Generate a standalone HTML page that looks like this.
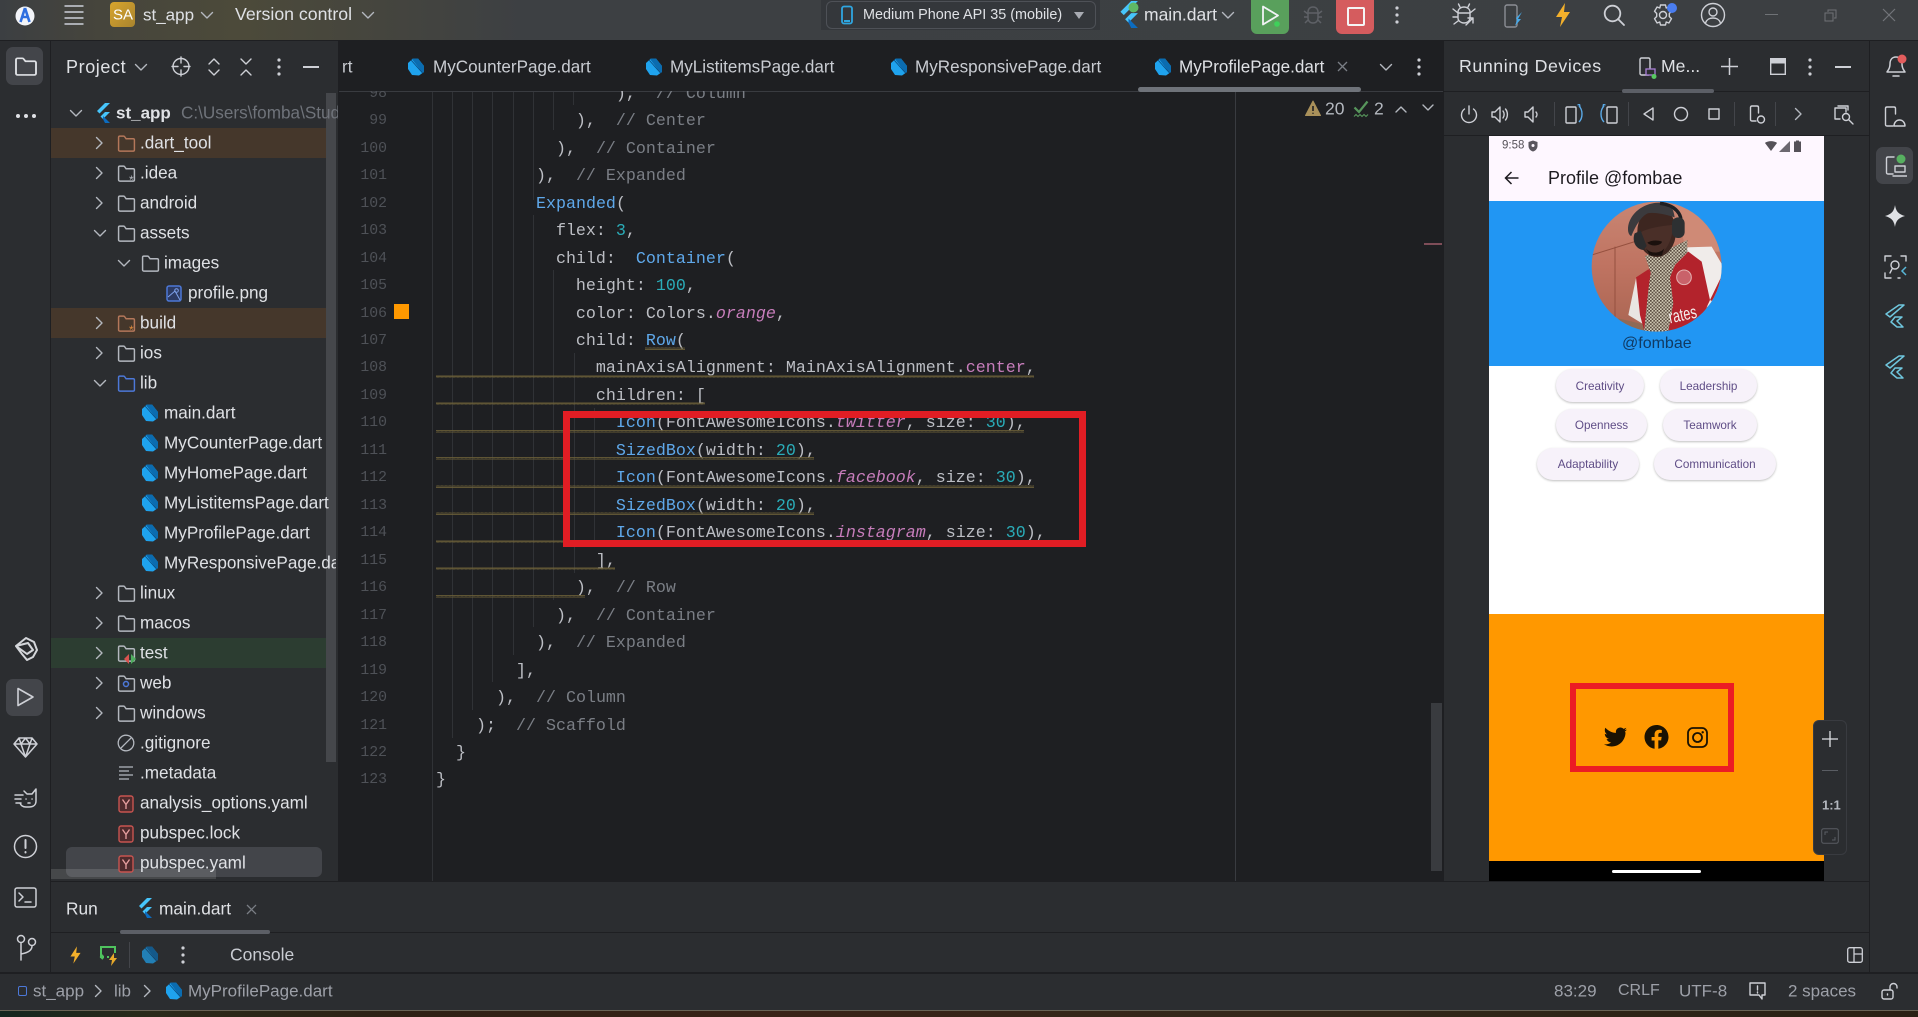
<!DOCTYPE html>
<html><head><meta charset="utf-8"><title>st_app</title>
<style>
html,body{margin:0;padding:0;background:#1e1f22}
#r{position:relative;width:1918px;height:1017px;overflow:hidden;background:#2b2d30;font-family:"Liberation Sans",sans-serif;color:#dfe1e5}
#r div,#r svg{position:absolute}
.t{position:absolute;white-space:pre;line-height:1;transform:translateY(-50%);font-size:17.15px;color:#dfe1e5}
.s{font-size:17.1px;color:#c9ccd2}
.u{font-size:17px;color:#9da0a8}
.k{stroke:#ced0d6;fill:none;stroke-width:1.4;stroke-linecap:round;stroke-linejoin:round}
.hl{left:51px;width:275px;height:30px}
#code{position:absolute;left:0;top:91px;width:1236px;height:790px;overflow:hidden;font-family:"Liberation Mono",monospace;font-size:16.67px;color:#bcbec4}
#code .l{position:relative;height:27.48px;line-height:27.48px;padding-left:436px;white-space:pre}
#code b{position:absolute;left:358px;width:29px;text-align:right;font-weight:400;font-size:14.8px;color:#4e5157}
i{font-style:italic;color:#c77dbb}
.b{color:#5fa8ea}.n{color:#2aacb8}.c{color:#7a7e85}
.chip{background:#f7f2fa;border-radius:17px;box-shadow:0 1px 2px rgba(0,0,0,.25);color:#5f4d86;font-size:11.7px;text-align:center;white-space:pre}
</style></head><body>
<div id="r">
<svg width="0" height="0" style="left:0;top:0">
<defs>
<symbol id="folder" viewBox="0 0 18 18"><path d="M1.5 15V3.2c0-.7.5-1.2 1.2-1.2h3.6c.4 0 .7.2.9.5L8.6 4.5h6.7c.7 0 1.2.5 1.2 1.2V15c0 .7-.5 1.2-1.2 1.2H2.7c-.7 0-1.200-.5-1.200-1.200z" fill="none" stroke="currentColor" stroke-width="1.4"/></symbol>
<symbol id="dart" viewBox="0 0 18 18"><path d="M6 .5 11 .5 17 8 17 14 12 17.500 5 17 1 11 1 5z" fill="#1fa3ee"/><path d="M5 1 6 .5 11 .5 17 8 17 14 15.500 15z" fill="#0b6cb0"/><path d="M4 2 15.500 15" stroke="#0a4a7e" stroke-width=".8"/></symbol>
<symbol id="flutter" viewBox="0 0 16 20"><path d="M10 0h5L4.500 10.500 2 8z" fill="#47c5fb"/><path d="M15 9h-5l-4.500 4.500L8 16z" fill="#47c5fb"/><path d="M8 16l2 4h5l-7-7z" fill="#0c6cc0"/></symbol>
<symbol id="cr" viewBox="0 0 18 18"><path d="M6.500 3.500 12 9l-5.500 5.500" fill="none" stroke="#b4b8bf" stroke-width="1.400" stroke-linecap="round" stroke-linejoin="round"/></symbol>
<symbol id="cd" viewBox="0 0 18 18"><path d="M3.500 6.500 9 12l5.500-5.500" fill="none" stroke="#b4b8bf" stroke-width="1.400" stroke-linecap="round" stroke-linejoin="round"/></symbol>
<symbol id="yaml" viewBox="0 0 16 18"><rect x="1" y="1" width="14" height="16" rx="2" fill="#4f2b2d" stroke="#c75450" stroke-width="1.400"/><path d="M4.500 4.500 8 9.500l3.500-5M8 9.500V14" fill="none" stroke="#e8a0a0" stroke-width="1.300"/></symbol>
<symbol id="dots" viewBox="0 0 6 20"><circle cx="3" cy="3" r="1.600" fill="#ced0d6"/><circle cx="3" cy="10" r="1.600" fill="#ced0d6"/><circle cx="3" cy="17" r="1.600" fill="#ced0d6"/></symbol>
<pattern id="w" width="4" height="3" patternUnits="userSpaceOnUse"><path d="M0 2.500 1 .5 2 2.500 3 .5 4 2.500" fill="none" stroke="#6f6239" stroke-width=".8"/></pattern>
</defs></svg>

<!-- title bar -->
<div style="left:0;top:0;width:1918px;height:40px;background:linear-gradient(90deg,#3c3f42 0,#46453c 100px,#4c4a3a 240px,#45453e 380px,#3d4043 520px,#3c3f42 100%)"></div>
<div style="left:0;top:40px;width:1918px;height:1px;background:#1e1f22"></div>
<svg style="left:14px;top:5px" width="22" height="22" viewBox="0 0 22 22"><circle cx="11" cy="11" r="9.500" fill="#f2f4f8"/><path d="M11 3 6.500 17M11 3l4.500 14M8 12h6" stroke="#2f6fe0" stroke-width="2.600" fill="none"/></svg>
<svg style="left:63px;top:4px" width="22" height="22" viewBox="0 0 22 22"><path d="M1.500 2h19M1.500 8h19M1.500 14h19M1.500 20h19" stroke="#b9bcc2" stroke-width="1.800" fill="none"/></svg>
<div style="left:110px;top:2px;width:25px;height:25px;border-radius:4px;background:linear-gradient(135deg,#d8a52d,#a9842e)"></div>
<span class="t" style="left:113px;top:15px;font-size:15px;color:#fff">SA</span>
<span class="t" style="left:143px;top:15px;font-size:17px">st_app</span>
<svg style="left:198px;top:6px" width="18" height="18"><use href="#cd"/></svg>
<span class="t" style="left:235px;top:15px;font-size:17.700px">Version control</span>
<svg style="left:359px;top:6px" width="18" height="18"><use href="#cd"/></svg>

<div style="left:821px;top:0;width:279px;height:30px;background:#34373b"></div>
<div style="left:826px;top:1px;width:268px;height:26px;border:1px solid #4e5157;border-radius:6px"></div>
<svg style="left:840px;top:5px" width="14" height="20" viewBox="0 0 14 20"><rect x="2" y="1.500" width="10" height="17" rx="2" fill="none" stroke="#2fa6e0" stroke-width="1.800"/><rect x="4" y="15" width="6" height="2" fill="#2fa6e0"/></svg>
<span class="t" style="left:863px;top:15px;font-size:14.400px;color:#dfe1e5">Medium Phone API 35 (mobile)</span>
<svg style="left:1073px;top:11px" width="12" height="9"><path d="M1 1h10L6 8z" fill="#a8abb2"/></svg>
<svg style="left:1117px;top:1px" width="23" height="27" viewBox="0 0 16 20"><use href="#flutter"/></svg>
<svg style="left:1128px;top:2px" width="11" height="11"><circle cx="5.500" cy="5.500" r="5" fill="#5fb865"/></svg>
<span class="t" style="left:1144px;top:15px;font-size:17.500px">main.dart</span>
<svg style="left:1219px;top:6px" width="18" height="18"><use href="#cd"/></svg>
<div style="left:1251px;top:-6px;width:38px;height:40px;background:#59a05c;border-radius:6px"></div>
<svg style="left:1259px;top:3px" width="24" height="26" viewBox="0 0 24 26"><path d="M4 3.500 19 12.500 4 21.500z" fill="none" stroke="#f1f3f5" stroke-width="1.800" stroke-linejoin="round"/><circle cx="18" cy="21" r="2.800" fill="#3fd05a"/></svg>
<svg style="left:1302px;top:4px" width="22" height="22" viewBox="0 0 22 22"><path d="M6 8c0-3 2-5 5-5s5 2 5 5v6c0 3-2 5-5 5s-5-2-5-5zM2 7l4 3M20 7l-4 3M2 13h4M20 13h-4M3 19l3-3M19 19l-3-3M6 9h10" fill="none" stroke="#5e6166" stroke-width="1.500"/></svg>
<div style="left:1336px;top:-6px;width:38px;height:40px;background:#d55c5e;border-radius:6px"></div>
<div style="left:1347px;top:7px;width:14px;height:15px;border:2px solid #f5f5f5;border-radius:2px"></div>
<svg style="left:1394px;top:5px" width="6" height="20"><use href="#dots"/></svg>
<svg style="left:1451px;top:3px" width="26" height="24" viewBox="0 0 26 24"><path d="M7 9c0-3 3-5 6-5s6 2 6 5v6c0 3-3 5-6 5s-6-2-6-5zM2 6l5 4M2 14h5M3 21l4-3M24 6l-5 4M7 10h12M9 4 7.500 1M17 4l1.500-3" class="k"/><path d="M15 22l7-7m0 0h-5m5 0v5" class="k"/></svg>
<svg style="left:1503px;top:3px" width="20" height="26" viewBox="0 0 20 26"><rect x="2" y="2" width="12" height="22" rx="2" class="k" style="stroke:#8b8e94"/><path d="M13 15 19 9l-4 7 3 0-6 7 2-6z" fill="#47a9e8"/></svg>
<svg style="left:1554px;top:2px" width="18" height="26" viewBox="0 0 18 26"><path d="M11 1 2 15h6l-2 10 10-15h-6z" fill="#f3b02b"/></svg>
<svg style="left:1602px;top:3px" width="24" height="24" viewBox="0 0 24 24"><circle cx="10.500" cy="10.500" r="7.800" class="k" style="stroke-width:1.800"/><path d="M16 16l6 6" class="k" style="stroke-width:1.800"/></svg>
<svg style="left:1651px;top:3px" width="24" height="24" viewBox="0 0 24 24"><path d="M9.500 2h5l.7 3 2.700-1 2.600 4.300-2.200 2.200v3l2.200 2.200-2.600 4.300-2.700-1-.7 3h-5l-.7-3-2.700 1-2.600-4.300 2.200-2.200v-3L3.500 8.300 6.100 4l2.700 1z" class="k"/><circle cx="12" cy="12" r="3.500" class="k"/></svg>
<svg style="left:1666px;top:2px" width="12" height="12"><circle cx="6" cy="6" r="5" fill="#4a7df0"/></svg>
<svg style="left:1700px;top:2px" width="26" height="26" viewBox="0 0 26 26"><circle cx="13" cy="13" r="11.500" class="k"/><circle cx="13" cy="10" r="4" class="k"/><path d="M5.500 21c1.500-4 4-5 7.500-5s6 1 7.500 5" class="k"/></svg>
<div style="left:1765px;top:14px;width:13px;height:1px;background:#6f7276"></div>
<svg style="left:1824px;top:9px" width="13" height="13"><path d="M1 4h8v8H1zM4 3V1h8v8h-2" fill="none" stroke="#6f7276"/></svg>
<svg style="left:1882px;top:8px" width="14" height="14"><path d="M1 1l12 12M13 1 1 13" stroke="#72757a" stroke-width="1.200"/></svg>

<!-- left stripe -->
<div style="left:50px;top:41px;width:1px;height:931px;background:#1e1f22"></div>
<div style="left:6px;top:47px;width:37px;height:38px;border-radius:7px;background:#43454a"></div>
<svg style="left:14px;top:56px;color:#dfe1e5" width="24" height="21" viewBox="0 0 18 18" preserveAspectRatio="none"><use href="#folder"/></svg>
<svg style="left:15px;top:113px" width="22" height="6"><circle cx="3" cy="3" r="2" fill="#dfe1e5"/><circle cx="11" cy="3" r="2" fill="#dfe1e5"/><circle cx="19" cy="3" r="2" fill="#dfe1e5"/></svg>
<svg style="left:14px;top:636px" width="24" height="25" viewBox="0 0 24 25"><path d="M2 10 12 2 20 6 23 14 19 21 13 24 8 18zM2 10 14 7 19 14 13 18 2 10z" fill="none" stroke="#d4d6da" stroke-width="2" stroke-linejoin="round"/></svg>
<div style="left:6px;top:679px;width:37px;height:37px;border-radius:7px;background:#43454a"></div>
<svg style="left:15px;top:686px" width="20" height="22" viewBox="0 0 20 22"><path d="M3 2.500 18 11 3 19.500z" class="k" style="stroke-width:1.600"/></svg>
<svg style="left:13px;top:736px" width="25" height="22" viewBox="0 0 25 22"><path d="M6 2h13l5 6-11.500 13L1 8zM1 8h23M8 8l4.500 13L17 8M6 2l2 6 4.500-6 4.500 6 2-6" class="k" style="stroke-width:1.500"/></svg>
<svg style="left:14px;top:787px" width="24" height="22" viewBox="0 0 24 22"><path d="M10 4 13 7h5l4-5v12c0 4-3 6-7 6h-3c-3 0-5-1-6-4M1 8h8M1 12h6M2 16h5M12 12h.1M18 12h.1M14 16h2" class="k" style="stroke-width:1.500"/></svg>
<svg style="left:13px;top:834px" width="25" height="25" viewBox="0 0 25 25"><circle cx="12.500" cy="12.500" r="11" class="k" style="stroke-width:1.500"/><path d="M12.500 6v8M12.500 18v.5" class="k" style="stroke-width:2"/></svg>
<svg style="left:14px;top:887px" width="23" height="21" viewBox="0 0 23 21"><rect x="1" y="1" width="21" height="19" rx="2" class="k" style="stroke-width:1.500"/><path d="M5 6l4 4-4 4M11 15h6" class="k" style="stroke-width:1.500"/></svg>
<svg style="left:15px;top:934px" width="22" height="28" viewBox="0 0 22 28"><circle cx="6" cy="5" r="3.500" class="k" style="stroke-width:1.500"/><circle cx="17" cy="8" r="3.500" class="k" style="stroke-width:1.500"/><path d="M6 9v17M17 12c0 5-5 7-11 8" class="k" style="stroke-width:1.500"/></svg>

<!-- project panel -->
<div style="left:338px;top:41px;width:1px;height:840px;background:#1e1f22"></div>
<span class="t" style="left:66px;top:67px;font-size:18px;letter-spacing:.6px">Project</span>
<svg style="left:132px;top:58px" width="18" height="18"><use href="#cd"/></svg>
<svg style="left:171px;top:56px" width="20" height="21" viewBox="0 0 20 21"><circle cx="10" cy="10.500" r="8" class="k"/><path d="M10 1v6M10 14v6M1 10.500h6M13 10.500h6" class="k"/></svg>
<svg style="left:207px;top:58px" width="14" height="18" viewBox="0 0 14 18"><path d="M2 6l5-5 5 5M2 12l5 5 5-5" class="k"/></svg>
<svg style="left:239px;top:58px" width="14" height="18" viewBox="0 0 14 18"><path d="M2 1l5 5 5-5M2 17l5-5 5 5" class="k"/></svg>
<svg style="left:276px;top:57px" width="6" height="20"><use href="#dots"/></svg>
<div style="left:303px;top:66px;width:16px;height:1.500px;background:#ced0d6"></div>

<div class="hl" style="top:128px;background:#45372b"></div>
<div class="hl" style="top:308px;background:#45372b"></div>
<div class="hl" style="top:638px;background:#2c3d31"></div>
<div style="left:66px;top:847px;width:256px;height:30px;border-radius:6px;background:#43454a"></div>
<div style="left:326px;top:93px;width:10px;height:669px;background:#45474b"></div>
<div style="left:51px;top:869px;width:165px;height:10px;background:rgba(255,255,255,.13)"></div>

<svg style="left:67px;top:104px" width="18" height="18"><use href="#cd"/></svg>
<svg style="left:95px;top:103px" width="16" height="20" viewBox="0 0 16 20"><use href="#flutter"/></svg>
<span class="t" style="left:116px;top:113px;font-weight:700;font-size:17px">st_app</span>
<div style="left:181px;top:100px;width:157px;height:26px;overflow:hidden"><span class="t" style="left:0;top:13px;color:#6f737a">C:\Users\fomba\Studio</span></div>

<svg style="left:90px;top:134px" width="18" height="18"><use href="#cr"/></svg>
<svg style="left:117px;top:134px;color:#b4775a" width="19" height="19"><use href="#folder"/></svg>
<span class="t" style="left:140px;top:143px">.dart_tool</span>
<svg style="left:90px;top:164px" width="18" height="18"><use href="#cr"/></svg>
<svg style="left:117px;top:164px;color:#b4b8bf" width="19" height="19"><use href="#folder"/></svg>
<span class="t" style="left:129px;top:180px;font-size:12px;color:#b4b8bf">*</span>
<span class="t" style="left:140px;top:173px">.idea</span>
<svg style="left:90px;top:194px" width="18" height="18"><use href="#cr"/></svg>
<svg style="left:117px;top:194px;color:#b4b8bf" width="19" height="19"><use href="#folder"/></svg>
<span class="t" style="left:140px;top:203px">android</span>
<svg style="left:91px;top:224px" width="18" height="18"><use href="#cd"/></svg>
<svg style="left:117px;top:224px;color:#b4b8bf" width="19" height="19"><use href="#folder"/></svg>
<span class="t" style="left:140px;top:233px">assets</span>
<svg style="left:115px;top:254px" width="18" height="18"><use href="#cd"/></svg>
<svg style="left:141px;top:254px;color:#b4b8bf" width="19" height="19"><use href="#folder"/></svg>
<span class="t" style="left:164px;top:263px">images</span>
<svg style="left:166px;top:285px" width="16" height="17" viewBox="0 0 16 17"><rect x="1" y="1" width="14" height="15" rx="2" fill="#2c3a63" stroke="#4c78d8" stroke-width="1.500"/><circle cx="10.500" cy="5.500" r="1.800" fill="none" stroke="#7da0ea"/><path d="M2 12 9 6l5 9" fill="none" stroke="#7da0ea"/></svg>
<span class="t" style="left:188px;top:293px">profile.png</span>
<svg style="left:90px;top:314px" width="18" height="18"><use href="#cr"/></svg>
<svg style="left:117px;top:314px;color:#b4775a" width="19" height="19"><use href="#folder"/></svg>
<span class="t" style="left:129px;top:330px;font-size:12px;color:#e08a3c">*</span>
<span class="t" style="left:140px;top:323px">build</span>
<svg style="left:90px;top:344px" width="18" height="18"><use href="#cr"/></svg>
<svg style="left:117px;top:344px;color:#b4b8bf" width="19" height="19"><use href="#folder"/></svg>
<span class="t" style="left:140px;top:353px">ios</span>
<svg style="left:91px;top:374px" width="18" height="18"><use href="#cd"/></svg>
<svg style="left:117px;top:374px;color:#4c78d8" width="19" height="19"><use href="#folder"/></svg>
<span class="t" style="left:140px;top:383px">lib</span>
<svg style="left:141px;top:404px" width="18" height="18"><use href="#dart"/></svg>
<span class="t" style="left:164px;top:413px">main.dart</span>
<svg style="left:141px;top:434px" width="18" height="18"><use href="#dart"/></svg>
<span class="t" style="left:164px;top:443px">MyCounterPage.dart</span>
<svg style="left:141px;top:464px" width="18" height="18"><use href="#dart"/></svg>
<span class="t" style="left:164px;top:473px">MyHomePage.dart</span>
<svg style="left:141px;top:494px" width="18" height="18"><use href="#dart"/></svg>
<span class="t" style="left:164px;top:503px">MyListitemsPage.dart</span>
<svg style="left:141px;top:524px" width="18" height="18"><use href="#dart"/></svg>
<span class="t" style="left:164px;top:533px">MyProfilePage.dart</span>
<svg style="left:141px;top:554px" width="18" height="18"><use href="#dart"/></svg>
<div style="left:164px;top:550px;width:172px;height:26px;overflow:hidden"><span class="t" style="left:0;top:13px">MyResponsivePage.dart</span></div>
<svg style="left:90px;top:584px" width="18" height="18"><use href="#cr"/></svg>
<svg style="left:117px;top:584px;color:#b4b8bf" width="19" height="19"><use href="#folder"/></svg>
<span class="t" style="left:140px;top:593px">linux</span>
<svg style="left:90px;top:614px" width="18" height="18"><use href="#cr"/></svg>
<svg style="left:117px;top:614px;color:#b4b8bf" width="19" height="19"><use href="#folder"/></svg>
<span class="t" style="left:140px;top:623px">macos</span>
<svg style="left:90px;top:644px" width="18" height="18"><use href="#cr"/></svg>
<svg style="left:117px;top:644px;color:#b4b8bf" width="19" height="19"><use href="#folder"/></svg>
<svg style="left:124px;top:654px" width="12" height="10"><path d="M5 0 0 5l5 5z" fill="#d9534f"/><path d="M7 0l5 5-5 5z" fill="#4fae5f"/></svg>
<span class="t" style="left:140px;top:653px">test</span>
<svg style="left:90px;top:674px" width="18" height="18"><use href="#cr"/></svg>
<svg style="left:117px;top:674px;color:#b4b8bf" width="19" height="19"><use href="#folder"/></svg>
<svg style="left:122px;top:680px" width="8" height="8"><circle cx="4" cy="4" r="2.500" fill="none" stroke="#4c78d8" stroke-width="1.500"/></svg>
<span class="t" style="left:140px;top:683px">web</span>
<svg style="left:90px;top:704px" width="18" height="18"><use href="#cr"/></svg>
<svg style="left:117px;top:704px;color:#b4b8bf" width="19" height="19"><use href="#folder"/></svg>
<span class="t" style="left:140px;top:713px">windows</span>
<svg style="left:117px;top:734px" width="18" height="18" viewBox="0 0 18 18"><circle cx="9" cy="9" r="7.800" fill="none" stroke="#b4b8bf" stroke-width="1.300"/><path d="M4 14 14 4" stroke="#b4b8bf" stroke-width="1.300"/></svg>
<span class="t" style="left:140px;top:743px">.gitignore</span>
<svg style="left:118px;top:766px" width="16" height="14" viewBox="0 0 16 14"><path d="M1 1h14M1 5h10M1 9h14M1 13h10" stroke="#b4b8bf" stroke-width="1.300"/></svg>
<span class="t" style="left:140px;top:773px">.metadata</span>
<svg style="left:118px;top:795px" width="16" height="18" viewBox="0 0 16 18"><use href="#yaml"/></svg>
<span class="t" style="left:140px;top:803px">analysis_options.yaml</span>
<svg style="left:118px;top:825px" width="16" height="18" viewBox="0 0 16 18"><use href="#yaml"/></svg>
<span class="t" style="left:140px;top:833px">pubspec.lock</span>
<svg style="left:118px;top:855px" width="16" height="18" viewBox="0 0 16 18"><use href="#yaml"/></svg>
<span class="t" style="left:140px;top:863px">pubspec.yaml</span>

<!-- editor -->
<div style="left:339px;top:41px;width:1104px;height:840px;background:#1e1f22"></div>
<div style="left:339px;top:91px;width:1104px;height:1px;background:#393b40"></div>
<span class="t s" style="left:342px;top:67px">rt</span>
<svg style="left:407px;top:58px" width="18" height="18"><use href="#dart"/></svg>
<span class="t s" style="left:433px;top:67px">MyCounterPage.dart</span>
<svg style="left:645px;top:58px" width="18" height="18"><use href="#dart"/></svg>
<span class="t s" style="left:670px;top:67px">MyListitemsPage.dart</span>
<svg style="left:890px;top:58px" width="18" height="18"><use href="#dart"/></svg>
<span class="t s" style="left:915px;top:67px">MyResponsivePage.dart</span>
<svg style="left:1154px;top:58px" width="18" height="18"><use href="#dart"/></svg>
<span class="t s" style="left:1179px;top:67px;color:#dfe1e5">MyProfilePage.dart</span>
<svg style="left:1336px;top:60px" width="14" height="14"><path d="M2 2l9 9M11 2l-9 9" stroke="#7a7e85" stroke-width="1.300"/></svg>
<svg style="left:1377px;top:58px" width="18" height="18"><use href="#cd"/></svg>
<svg style="left:1416px;top:57px" width="6" height="20"><use href="#dots"/></svg>
<div style="left:1138px;top:87px;width:223px;height:5px;border-radius:3px;background:#6f737a"></div>

<svg width="1236" height="881" style="left:0;top:0">
<g stroke="#303236" stroke-width="1">
<path d="M432.500 92V881M452.500 92V738M472.500 92V710M492.500 92V682M513.500 92V655M533.500 92V200M533.500 215V627M553.500 92V130M553.500 270V600M573.500 92V105M574.500 353V573M594.500 408V545"/>
</g>
<path d="M1235.500 92V881" stroke="#393b40"/>
<rect x="394" y="304" width="15" height="15" fill="#ff9800"/>
</svg>

<div id="code">
<div style="position:relative;margin-top:-10.250px">
<div class="l"><b>98</b>                  ),  <span class="c">// Column</span></div>
<div class="l"><b>99</b>              ),  <span class="c">// Center</span></div>
<div class="l"><b>100</b>            ),  <span class="c">// Container</span></div>
<div class="l"><b>101</b>          ),  <span class="c">// Expanded</span></div>
<div class="l"><b>102</b>          <span class="b">Expanded</span>(</div>
<div class="l"><b>103</b>            flex: <span class="n">3</span>,</div>
<div class="l"><b>104</b>            child:  <span class="b">Container</span>(</div>
<div class="l"><b>105</b>              height: <span class="n">100</span>,</div>
<div class="l"><b>106</b>              color: Colors.<i>orange</i>,</div>
<div class="l"><b>107</b>              child: <span class="b">Row</span>(</div>
<div class="l"><b>108</b>                mainAxisAlignment: MainAxisAlignment.<span style="color:#c77dbb">center</span>,</div>
<div class="l"><b>109</b>                children: [</div>
<div class="l"><b>110</b>                  <span class="b">Icon</span>(FontAwesomeIcons.<i>twitter</i>, size: <span class="n">30</span>),</div>
<div class="l"><b>111</b>                  <span class="b">SizedBox</span>(width: <span class="n">20</span>),</div>
<div class="l"><b>112</b>                  <span class="b">Icon</span>(FontAwesomeIcons.<i>facebook</i>, size: <span class="n">30</span>),</div>
<div class="l"><b>113</b>                  <span class="b">SizedBox</span>(width: <span class="n">20</span>),</div>
<div class="l"><b>114</b>                  <span class="b">Icon</span>(FontAwesomeIcons.<i>instagram</i>, size: <span class="n">30</span>),</div>
<div class="l"><b>115</b>                ],</div>
<div class="l"><b>116</b>              ),  <span class="c">// Row</span></div>
<div class="l"><b>117</b>            ),  <span class="c">// Container</span></div>
<div class="l"><b>118</b>          ),  <span class="c">// Expanded</span></div>
<div class="l"><b>119</b>        ],</div>
<div class="l"><b>120</b>      ),  <span class="c">// Column</span></div>
<div class="l"><b>121</b>    );  <span class="c">// Scaffold</span></div>
<div class="l"><b>122</b>  }</div>
<div class="l"><b>123</b>}</div>
</div></div>

<svg width="1236" height="881" style="left:0;top:0">
<rect x="645" y="347" width="40" height="3" fill="url(#w)"/>
<rect x="436" y="375" width="598" height="3" fill="url(#w)"/>
<rect x="436" y="402" width="269" height="3" fill="url(#w)"/>
<rect x="436" y="430" width="588" height="3" fill="url(#w)"/>
<rect x="436" y="457" width="378" height="3" fill="url(#w)"/>
<rect x="436" y="485" width="598" height="3" fill="url(#w)"/>
<rect x="436" y="512" width="378" height="3" fill="url(#w)"/>
<rect x="436" y="540" width="608" height="3" fill="url(#w)"/>
<rect x="436" y="567" width="179" height="3" fill="url(#w)"/>
<rect x="436" y="595" width="149" height="3" fill="url(#w)"/>
</svg>
<div style="left:563px;top:411px;width:523px;height:136px;box-sizing:border-box;border:7px solid #e11d24"></div>

<svg style="left:1305px;top:100px" width="16" height="17" viewBox="0 0 16 17"><path d="M8 1 15.500 15.500H.5z" fill="#a9905a" stroke="#a9905a" stroke-linejoin="round"/><path d="M8 6v5M8 12.800v1" stroke="#1e1f22" stroke-width="1.600"/></svg>
<span class="t" style="left:1325px;top:109px;color:#b4b8bf;font-size:17.500px">20</span>
<svg style="left:1353px;top:100px" width="16" height="19" viewBox="0 0 16 19"><path d="M1.500 7.500 6 12 14.500 1.500" fill="none" stroke="#57965c" stroke-width="2.200"/><path d="M1 16.500l2-2 2 2 2-2 2 2 2-2 2 2 2-2" fill="none" stroke="#57965c" stroke-width="1.100"/></svg>
<span class="t" style="left:1374px;top:109px;color:#b4b8bf;font-size:17.500px">2</span>
<svg style="left:1394px;top:104px" width="14" height="10"><path d="M2 8l5-5 5 5" class="k" style="stroke:#b4b8bf"/></svg>
<svg style="left:1421px;top:103px" width="14" height="10"><path d="M2 2l5 5 5-5" class="k" style="stroke:#b4b8bf"/></svg>
<div style="left:1424px;top:243px;width:18px;height:2px;background:#7e4d58"></div>
<div style="left:1431px;top:703px;width:11px;height:168px;background:#393b3f"></div>

<!-- running devices panel -->
<div style="left:1443px;top:41px;width:1px;height:840px;background:#1e1f22"></div>
<div style="left:1869px;top:41px;width:1px;height:931px;background:#1e1f22"></div>
<div style="left:1444px;top:91px;width:425px;height:1px;background:#1e1f22"></div>
<div style="left:1444px;top:135px;width:425px;height:1px;background:#1e1f22"></div>
<span class="t" style="left:1459px;top:67px;font-size:17.800px;letter-spacing:.55px">Running Devices</span>
<svg style="left:1639px;top:57px" width="19" height="22" viewBox="0 0 19 22"><rect x="1" y="1" width="10" height="17" rx="1.500" class="k"/><rect x="7" y="12" width="9" height="6" fill="#2b2d30" stroke="#a97fd6" stroke-width="1.300"/><circle cx="15" cy="19.500" r="2.500" fill="#57c961"/></svg>
<span class="t" style="left:1661px;top:67px;font-size:17.600px">Me...</span>
<div style="left:1622px;top:89px;width:92px;height:4px;background:#5c5f66;border-radius:2px"></div>
<svg style="left:1720px;top:57px" width="19" height="19"><path d="M9.500 1v17M1 9.500h17" stroke="#ced0d6" stroke-width="1.500"/></svg>
<svg style="left:1770px;top:58px" width="16" height="17" viewBox="0 0 16 17"><rect x=".7" y=".7" width="14.600" height="15.600" class="k" style="stroke-linejoin:miter"/><rect x="1" y="1" width="14" height="4.500" fill="#ced0d6"/></svg>
<svg style="left:1807px;top:57px" width="6" height="20"><use href="#dots"/></svg>
<div style="left:1835px;top:66px;width:16px;height:1.500px;background:#ced0d6"></div>

<svg style="left:1460px;top:105px" width="18" height="19" viewBox="0 0 18 19"><path d="M9 1v8M4.500 4a7.500 7.500 0 1 0 9 0" class="k"/></svg>
<svg style="left:1491px;top:106px" width="18" height="17" viewBox="0 0 18 17"><path d="M1 6v5h3l5 5V1L4 6zM12 5c1.500 2 1.500 5 0 7M14.500 3c2.500 3 2.500 8 0 11" class="k"/></svg>
<svg style="left:1524px;top:106px" width="16" height="17" viewBox="0 0 16 17"><path d="M1 6v5h3l5 5V1L4 6zM12 6c1.300 1.500 1.300 3.500 0 5" class="k"/></svg>
<div style="left:1554px;top:102px;width:1px;height:24px;background:#43454a"></div>
<svg style="left:1565px;top:104px" width="20" height="21" viewBox="0 0 20 21"><rect x="1" y="3" width="10" height="16" rx="1" class="k"/><path d="M14 2c4 4 4 12 0 16M12.500 1l2-.5.5 2.500" fill="none" stroke="#5aa9e6" stroke-width="1.400"/></svg>
<svg style="left:1598px;top:104px" width="20" height="21" viewBox="0 0 20 21"><rect x="9" y="3" width="10" height="16" rx="1" class="k"/><path d="M6 2C2 6 2 14 6 18M7.500 1l-2-.5L5 3" fill="none" stroke="#5aa9e6" stroke-width="1.400"/></svg>
<div style="left:1628px;top:102px;width:1px;height:24px;background:#43454a"></div>
<svg style="left:1642px;top:106px" width="14" height="16"><path d="M11 2v12L2 8z" class="k"/></svg>
<svg style="left:1673px;top:106px" width="16" height="16"><circle cx="8" cy="8" r="6.500" class="k"/></svg>
<svg style="left:1707px;top:107px" width="14" height="14"><rect x="2" y="2" width="10" height="10" class="k"/></svg>
<div style="left:1734px;top:102px;width:1px;height:24px;background:#43454a"></div>
<svg style="left:1749px;top:105px" width="17" height="20" viewBox="0 0 17 20"><path d="M7 16H3c-1 0-1.500-.5-1.500-1.500v-12C1.500 1.500 2 1 3 1h5c1 0 1.500.5 1.500 1.500V8" class="k"/><circle cx="12" cy="14.500" r="3.500" class="k"/></svg>
<div style="left:1775px;top:102px;width:1px;height:24px;background:#43454a"></div>
<svg style="left:1789px;top:105px" width="18" height="18"><use href="#cr"/></svg>
<svg style="left:1834px;top:105px" width="20" height="20" viewBox="0 0 20 20"><path d="M6 14H1V3h11v4M4 1h10v4" class="k"/><circle cx="12" cy="12" r="3.500" class="k"/><path d="M15 15l4 4" class="k"/></svg>

<!-- phone -->
<div style="left:1489px;top:136px;width:335px;height:65px;background:#fef7ff"></div>
<span class="t" style="left:1502px;top:146px;font-size:11.500px;color:#555158">9:58</span>
<svg style="left:1528px;top:140px" width="10" height="12"><path d="M5 .5 9.500 2v4C9.500 9 7 11 5 11.500 3 11 .5 9 .5 6V2z" fill="#5a565e"/><circle cx="5" cy="5.500" r="1.500" fill="#fef7ff"/></svg>
<svg style="left:1765px;top:141px" width="12" height="10"><path d="M0 2C3-.5 9-.5 12 2L6 10z" fill="#555158"/></svg>
<svg style="left:1779px;top:141px" width="11" height="11"><path d="M11 0v11H0z" fill="#6c6870"/></svg>
<svg style="left:1794px;top:140px" width="7" height="12"><path d="M2 1.500V.5h3v1h2V12H0V1.500z" fill="#555158"/></svg>
<svg style="left:1504px;top:171px" width="15" height="14" viewBox="0 0 15 14"><path d="M14.500 7H2M7.500 1 1.500 7l6 6" fill="none" stroke="#1d1b20" stroke-width="1.500"/></svg>
<span class="t" style="left:1548px;top:178px;font-size:18px;color:#1d1b20">Profile @fombae</span>
<div style="left:1489px;top:201px;width:335px;height:165px;background:#2196f3"></div>
<svg style="left:1560px;top:190px" width="190" height="170" viewBox="0 0 570 510">
<defs><clipPath id="av"><circle cx="290" cy="230" r="195"/></clipPath>
<pattern id="pl" width="10" height="10" patternUnits="userSpaceOnUse"><rect width="10" height="10" fill="#d6cfbb"/><rect width="5" height="5" fill="#57493d"/><rect x="5" y="5" width="5" height="5" fill="#57493d"/></pattern>
<linearGradient id="wall" x1="0" y1="0" x2="0" y2="1"><stop offset="0" stop-color="#c98673"/><stop offset=".5" stop-color="#bf7361"/><stop offset="1" stop-color="#a96552"/></linearGradient></defs>
<g clip-path="url(#av)">
<rect x="90" y="30" width="400" height="400" fill="url(#wall)"/>
<path d="M95 195 240 150M165 170V420" stroke="#95503f" stroke-width="3" fill="none"/>
<path d="M340 35h150v150h-110z" fill="#cf8a76"/>
<path d="M175 385 260 405 250 430H170z" fill="#8f6a55"/>
<path d="M205 375 228 265 262 245 262 410z" fill="#e9e5e2"/>
<path d="M375 172 455 170 490 230 485 270 470 325 440 352 410 240z" fill="#f0ecea"/>
<path d="M228 262 262 240 385 185 425 215 450 330 420 395 330 425 252 420 240 375z" fill="#b3232c"/>
<path d="M450 330 483 262 488 300 470 340z" fill="#b3232c"/>
<path d="M255 198 330 175 382 150 382 188 345 225 330 262 340 340 325 425 252 425 265 300 272 248z" fill="url(#pl)"/>
<circle cx="372" cy="262" r="22" fill="#c9626a" stroke="#e4b1b1" stroke-width="3"/>
<text x="330" y="400" font-family="Liberation Sans,sans-serif" font-size="54" fill="#f4efee" textLength="85" lengthAdjust="spacingAndGlyphs" transform="rotate(-12 330 400)">rates</text>
<ellipse cx="290" cy="125" rx="58" ry="76" fill="#3d2620"/>
<path d="M240 130c10-15 85-25 98-25 2 45-25 92-55 92-25-4-40-35-43-67z" fill="#4a2f28"/>
<path d="M262 158c14-8 30-8 44-3-2 13-34 16-44 3zM258 175c10 15 40 18 55 0l-8 22H270z" fill="#1a100d"/>
<path d="M204 118c0-42 42-82 100-80 22 0 36 12 40 44-45-14-75-16-85-10-18 12-32 35-45 66-6-2-10-10-10-20z" fill="#3b3a3d"/>
<path d="M300 40c45 5 68 32 62 62" fill="none" stroke="#1f1f22" stroke-width="10"/>
<rect x="336" y="82" width="38" height="62" rx="18" fill="#2d3032"/>
<path d="M224 130c-8 20 0 46 26 50l10-12-18-46z" fill="#2a2c2e"/>
</g></svg>
<span class="t" style="left:1622px;top:344px;font-size:16px;color:#103a63">@fombae</span>
<div style="left:1489px;top:366px;width:335px;height:248px;background:#fff"></div>
<div class="chip" style="left:1556px;top:369px;width:88px;height:33px;line-height:35px">Creativity</div>
<div class="chip" style="left:1660px;top:369px;width:97px;height:33px;line-height:35px">Leadership</div>
<div class="chip" style="left:1556px;top:409px;width:91px;height:32px;line-height:34px">Openness</div>
<div class="chip" style="left:1663px;top:409px;width:94px;height:32px;line-height:34px">Teamwork</div>
<div class="chip" style="left:1537px;top:448px;width:102px;height:32px;line-height:34px">Adaptability</div>
<div class="chip" style="left:1654px;top:448px;width:122px;height:32px;line-height:34px">Communication</div>
<div style="left:1489px;top:614px;width:335px;height:247px;background:#ff9800"></div>
<div style="left:1489px;top:861px;width:335px;height:20px;background:#000"></div>
<div style="left:1612px;top:870px;width:89px;height:3px;border-radius:2px;background:#fff"></div>
<div style="left:1570px;top:683px;width:164px;height:89px;box-sizing:border-box;border:6px solid #ec1c24"></div>
<svg style="left:1604px;top:727px" width="24" height="21" viewBox="0 0 24 20"><path d="M21.500 5c0 6.500-5 14-14 14-2.800 0-5.400-.8-7.500-2.200.4 0 .8.100 1.200.100 2.300 0 4.400-.8 6-2-2.200 0-4-1.500-4.600-3.400.3.100.6.100 1 .1.400 0 .9-.1 1.300-.2C2.600 10.900.8 8.800.8 6.300v-.1c.7.400 1.500.6 2.300.7C1.700 6 .8 4.400.8 2.700c0-.9.200-1.800.7-2.500C4 3.200 7.800 5.200 12 5.400c-.1-.4-.1-.7-.1-1.100C11.900 1.900 13.900 0 16.300 0c1.300 0 2.400.5 3.200 1.400 1-.2 2-.6 2.800-1.100-.3 1-1 1.900-1.900 2.400.9-.1 1.700-.3 2.500-.7-.6.900-1.300 1.600-2.100 2.200z" fill="#1a1203"/></svg>
<svg style="left:1644px;top:725px" width="25" height="24" viewBox="0 0 25 25"><path d="M25 12.500C25 5.600 19.400 0 12.500 0S0 5.600 0 12.500c0 6.200 4.600 11.400 10.500 12.300v-8.700H7.400v-3.600h3.100V9.800c0-3.100 1.900-4.900 4.700-4.900 1.400 0 2.800.3 2.800.3v3h-1.600c-1.500 0-2 1-2 1.900v2.300h3.500l-.6 3.600h-2.900v8.700C20.400 23.900 25 18.700 25 12.500z" fill="#1a1203"/></svg>
<svg style="left:1687px;top:727px" width="21" height="21" viewBox="0 0 21 21"><rect x="1" y="1" width="19" height="19" rx="5" fill="none" stroke="#1a1203" stroke-width="1.800"/><circle cx="10.500" cy="10.500" r="4.500" fill="none" stroke="#1a1203" stroke-width="1.800"/><circle cx="15.700" cy="5.300" r="1.200" fill="#1a1203"/></svg>
<div style="left:1813px;top:720px;width:34px;height:135px;box-sizing:border-box;background:#2b2d30;border:1px solid #393b40;border-radius:6px"></div>
<svg style="left:1821px;top:730px" width="18" height="18"><path d="M9 1v16M1 9h16" stroke="#dfe1e5" stroke-width="1.300"/></svg>
<div style="left:1822px;top:770px;width:16px;height:1px;background:#5a5d63"></div>
<span class="t" style="left:1822px;top:805px;font-size:13px;font-weight:700;color:#b4b8bf">1:1</span>
<svg style="left:1821px;top:828px" width="18" height="16"><rect x=".7" y=".7" width="16.600" height="14.600" rx="2" fill="none" stroke="#5a5d63"/><path d="M4 7V4h3M14 9v3h-3" fill="none" stroke="#5a5d63"/></svg>

<!-- right stripe -->
<svg style="left:1885px;top:54px" width="24" height="26" viewBox="0 0 24 26"><path d="M11 3c-4 0-6 3-6 7 0 5-2 6-3 8h18c-1-2-3-3-3-8 0-4-2-7-6-7zM8 22h6" class="k" style="stroke-width:1.500"/><circle cx="17" cy="5" r="4.500" fill="#e35d5d"/></svg>
<svg style="left:1884px;top:105px" width="22" height="24" viewBox="0 0 22 24"><path d="M9 21H3c-1 0-1.500-.5-1.500-1.500v-16C1.500 2.500 2 2 3 2h7c1 0 1.500.5 1.500 1.500V9M10 21h11c0-3-2-6-5.500-6S10 18 10 21z" class="k"/></svg>
<div style="left:1876px;top:147px;width:37px;height:37px;border-radius:7px;background:#43454a"></div>
<svg style="left:1885px;top:154px" width="22" height="24" viewBox="0 0 22 24"><path d="M8 20H3c-1 0-1.500-.5-1.500-1.500v-14C1.500 3.500 2 3 3 3h6M10 12h10v6H10zM8 22h14" class="k"/><circle cx="16" cy="5" r="4.500" fill="#57b060"/></svg>
<svg style="left:1885px;top:205px" width="20" height="22" viewBox="0 0 20 22"><path d="M10 0c1 6 3 9 10 11-7 2-9 5-10 11C9 16 7 13 0 11c7-2 9-5 10-11z" fill="#dfe1e5"/></svg>
<svg style="left:1884px;top:255px" width="24" height="24" viewBox="0 0 24 24"><path d="M1 6V1h6M17 1h5v5M1 18v5h6M14 23h2" class="k"/><circle cx="11" cy="10" r="4" class="k"/><path d="M8 14l-2 4" class="k"/><path d="M22 12l-4 4 4 4" fill="none" stroke="#58b7d8" stroke-width="1.500"/></svg>
<svg style="left:1885px;top:304px" width="21" height="24" viewBox="0 0 21 24"><path d="M14 1h5L5 13l-4-3zM10 13h7l-5 4 6 6h-6l-6-5z" fill="none" stroke="#6fc6dd" stroke-width="1.500" stroke-linejoin="round"/></svg>
<svg style="left:1885px;top:355px" width="21" height="24" viewBox="0 0 21 24"><path d="M14 1h5L5 13l-4-3zM10 13h7l-5 4 6 6h-6l-6-5z" fill="none" stroke="#6fc6dd" stroke-width="1.500" stroke-linejoin="round"/></svg>

<!-- run tool window -->
<div style="left:51px;top:881px;width:1818px;height:1px;background:#1e1f22"></div>
<div style="left:51px;top:932px;width:1818px;height:1px;background:#1e1f22"></div>
<span class="t" style="left:66px;top:909px;font-size:17.300px">Run</span>
<svg style="left:137px;top:898px" width="16" height="20" viewBox="0 0 16 20"><use href="#flutter"/></svg>
<span class="t" style="left:159px;top:909px;font-size:17.300px">main.dart</span>
<svg style="left:245px;top:903px" width="13" height="13"><path d="M2 2l9 9M11 2l-9 9" stroke="#7a7e85" stroke-width="1.300"/></svg>
<div style="left:120px;top:930px;width:150px;height:4px;background:#5c5f66;border-radius:2px"></div>
<svg style="left:69px;top:944px" width="13" height="22" viewBox="0 0 18 26"><path d="M11 1 2 15h6l-2 10 10-15h-6z" fill="#f3b02b"/></svg>
<svg style="left:99px;top:944px" width="20" height="22" viewBox="0 0 20 22"><path d="M5 13H2V3h14v6M4 11l-2 2 2 2M8 13h2" fill="none" stroke="#4fc35e" stroke-width="2"/><path d="M15 9l-5 7h3l-1 6 6-8h-3z" fill="#e8a92a"/></svg>
<div style="left:129px;top:942px;width:1px;height:26px;background:#43454a"></div>
<svg style="left:141px;top:946px;opacity:.7" width="18" height="18"><use href="#dart"/></svg>
<svg style="left:180px;top:945px" width="6" height="20"><use href="#dots"/></svg>
<span class="t" style="left:230px;top:955px;font-size:17.500px;color:#c9ccd2">Console</span>
<svg style="left:1847px;top:947px" width="16" height="16"><rect x=".7" y=".7" width="14.600" height="14.600" rx="2" fill="none" stroke="#ced0d6" stroke-width="1.300"/><path d="M7 1v14M7 7h8" stroke="#ced0d6" stroke-width="1.300"/></svg>

<!-- status bar -->
<div style="left:0;top:972px;width:1918px;height:2px;background:#1e1f22"></div>
<div style="left:18px;top:986px;width:9px;height:10px;box-sizing:border-box;border:1.500px solid #4c78d8;border-radius:2px"></div>
<span class="t u" style="left:33px;top:991px">st_app</span>
<svg style="left:89px;top:982px" width="18" height="18"><use href="#cr"/></svg>
<span class="t u" style="left:114px;top:991px">lib</span>
<svg style="left:138px;top:982px" width="18" height="18"><use href="#cr"/></svg>
<svg style="left:165px;top:982px" width="18" height="18"><use href="#dart"/></svg>
<span class="t u" style="left:188px;top:991px">MyProfilePage.dart</span>
<span class="t u" style="left:1554px;top:991px">83:29</span>
<span class="t u" style="left:1618px;top:991px;font-size:16px">CRLF</span>
<span class="t u" style="left:1679px;top:991px">UTF-8</span>
<svg style="left:1749px;top:982px" width="18" height="18" viewBox="0 0 18 18"><path d="M1 1h15v12h-3v4l-3-4H1z" class="k"/><path d="M8.500 4v4M8.500 10v1" class="k"/></svg>
<span class="t u" style="left:1788px;top:991px">2 spaces</span>
<svg style="left:1881px;top:982px" width="18" height="18" viewBox="0 0 18 18"><rect x="1" y="8" width="11" height="9" rx="2" class="k"/><path d="M9 8V5c0-2 1.500-3.500 3.500-3.500S16 3 16 5v1M6.500 12v1" class="k"/></svg>
<div style="left:0;top:1010px;width:1918px;height:1px;background:#6a6456"></div>
<div style="left:0;top:1011px;width:1918px;height:6px;background:linear-gradient(90deg,#14261f 0,#2a2a1a 150px,#2f2115 400px,#3a2318 800px,#33281a 1300px,#2a2014 1918px)"></div>
</div>
</body></html>
